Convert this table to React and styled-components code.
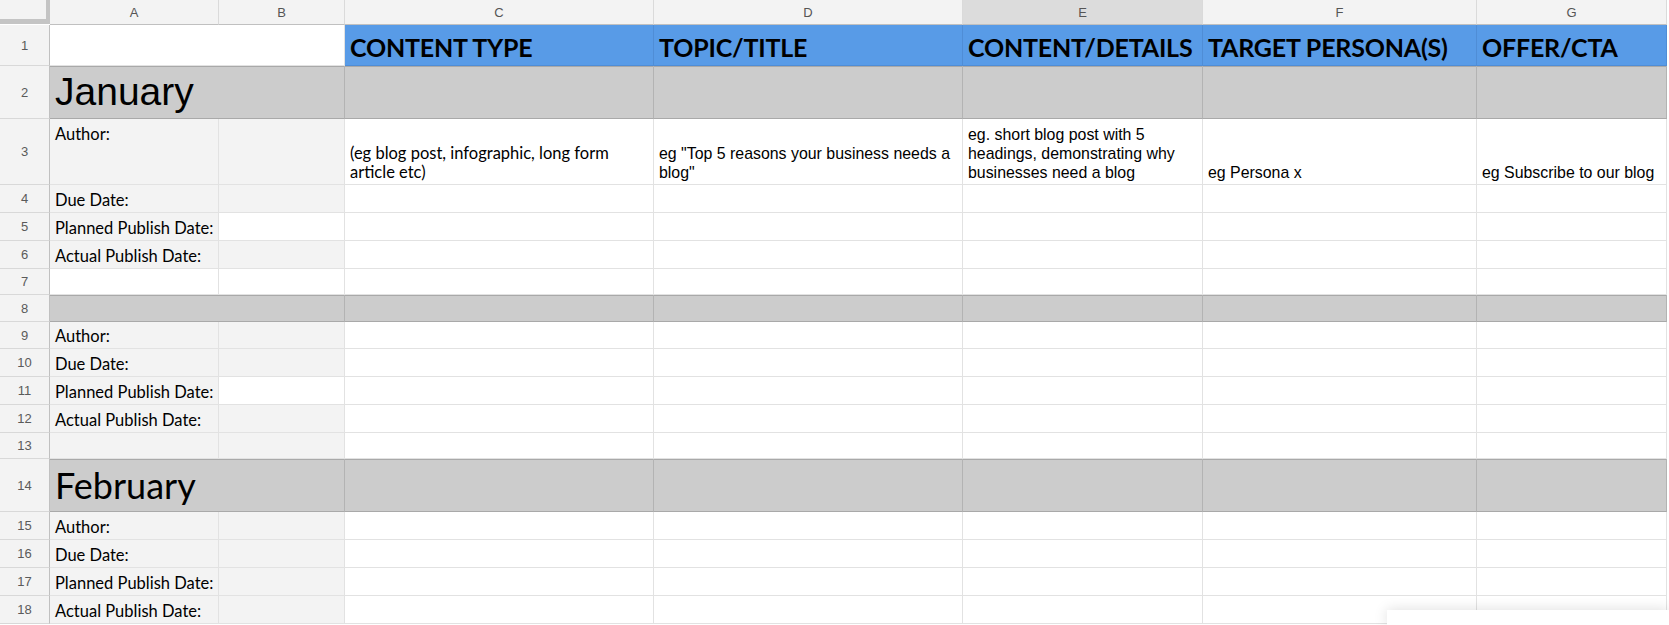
import React from "react";
import styled, { createGlobalStyle, css } from "styled-components";

const COLS = "50px 169px 126px 309px 309px 240px 274px 190px 2px";
const CALIBRI = `"Lato", "Open Sans", sans-serif`;
const ARIAL = `"Liberation Sans", Arial, sans-serif`;

const Global = createGlobalStyle`
  html, body {
    margin: 0;
    padding: 0;
    background: #ffffff;
    overflow: hidden;
  }
  * {
    box-sizing: border-box;
  }
`;

const tones = {
  white: css`
    background: #ffffff;
    border-right: 1px solid #e2e2e2;
    border-bottom: 1px solid #e2e2e2;
  `,
  label: css`
    background: #f3f3f3;
    border-right: 1px solid #e2e2e2;
    border-bottom: 1px solid #e2e2e2;
  `,
  blue: css`
    background: #589be7;
    border-right: 1px solid #4f8dd6;
    border-bottom: 1px solid #4f8dd6;
  `,
  band: css`
    background: #cccccc;
    border-right: 1px solid #b3b3b3;
    border-bottom: 1px solid #a9a9a9;
    box-shadow: inset 0 1px 0 #a9a9a9;
  `,
};

const Page = styled.div`
  position: relative;
  width: 1669px;
  height: 625px;
  overflow: hidden;
  background: #ffffff;
`;

const Row = styled.div`
  display: grid;
  grid-template-columns: ${COLS};
  height: ${({ $h }) => $h}px;
`;

const Corner = styled.div`
  background: #f3f3f3;
  border-right: 4px solid #c4c4c4;
  border-bottom: 5px solid #c4c4c4;
  height: 24px;
`;

const ColHead = styled.div`
  display: flex;
  align-items: center;
  justify-content: center;
  background: ${({ $active }) => ($active ? "#dcdcdc" : "#f3f3f3")};
  border-right: 1px solid #dadada;
  border-bottom: 1px solid #c0c0c0;
  font-family: ${ARIAL};
  font-size: 13px;
  color: #555555;
`;

const RowHead = styled.div`
  display: flex;
  align-items: center;
  justify-content: center;
  background: #f3f3f3;
  border-right: 1px solid #c0c0c0;
  border-bottom: 1px solid #d8d8d8;
  font-family: ${ARIAL};
  font-size: 13px;
  color: #5a5a5a;
`;

const Cell = styled.div`
  display: flex;
  flex-direction: column;
  justify-content: ${({ $v }) =>
    $v === "top" ? "flex-start" : $v === "center" ? "center" : "flex-end"};
  grid-column: span ${({ $span }) => $span || 1};
  padding: ${({ $v }) => ($v === "top" ? "6px 4px 0 5px" : "0 4px 2px 5px")};
  overflow: hidden;
  white-space: nowrap;
  color: #000000;
  font-family: ${({ $font }) => ($font === "arial" ? ARIAL : CALIBRI)};
  font-size: ${({ $font }) => ($font === "arial" ? "15.9px" : "16.5px")};
  line-height: 19px;
  ${({ $tone }) => tones[$tone || "white"]}
`;

const HeaderText = styled.span`
  font-family: ${CALIBRI};
  font-weight: 700;
  font-size: 25px;
  line-height: 32px;
  letter-spacing: -0.2px;
`;

const Month = styled.span`
  font-family: ${({ $font }) => ($font === "arial" ? ARIAL : CALIBRI)};
  font-size: ${({ $font }) => ($font === "arial" ? "39px" : "36px")};
  line-height: 44px;
  padding-bottom: 2px;
`;

const Popup = styled.div`
  position: absolute;
  left: 1387px;
  top: 610px;
  right: 0;
  bottom: 0;
  background: #ffffff;
  box-shadow: 0 0 14px rgba(0, 0, 0, 0.14);
`;

const letters = ["A", "B", "C", "D", "E", "F", "G"];
const headers = [
  "CONTENT TYPE",
  "TOPIC/TITLE",
  "CONTENT/DETAILS",
  "TARGET PERSONA(S)",
  "OFFER/CTA",
];

const Blank = ({ n = 5, tone = "white" }) =>
  Array.from({ length: n }).map((_, i) => <Cell key={i} $tone={tone} />);

const LabelRow = ({ n, h, label, bTone = "label" }) => (
  <Row $h={h}>
    <RowHead>{n}</RowHead>
    <Cell $tone="label">{label}</Cell>
    <Cell $tone={bTone} />
    <Blank />
    <div />
  </Row>
);

const BandRow = ({ n, h, children }) => (
  <Row $h={h}>
    <RowHead>{n}</RowHead>
    <Cell $tone="band" $span={2}>
      {children}
    </Cell>
    <Blank tone="band" />
    <div />
  </Row>
);

const App = () => {
  return (
    <Page>
      <Global />
      <Row $h={25}>
        <Corner />
        {letters.map((l) => (
          <ColHead key={l} $active={l === "E"}>
            {l}
          </ColHead>
        ))}
        <div />
      </Row>

      <Row $h={41}>
        <RowHead>1</RowHead>
        <Cell $span={2} />
        {headers.map((t) => (
          <Cell key={t} $tone="blue">
            <HeaderText>{t}</HeaderText>
          </Cell>
        ))}
        <div />
      </Row>

      <BandRow n={2} h={53}>
        <Month $font="arial">January</Month>
      </BandRow>

      <Row $h={66}>
        <RowHead>3</RowHead>
        <Cell $tone="label" $v="top">
          Author:
        </Cell>
        <Cell $tone="label" />
        <Cell>
          <span>(eg blog post, infographic, long form</span>
          <span>article etc)</span>
        </Cell>
        <Cell $font="arial">
          <span>eg "Top 5 reasons your business needs a</span>
          <span>blog"</span>
        </Cell>
        <Cell $font="arial">
          <span>eg. short blog post with 5</span>
          <span>headings, demonstrating why</span>
          <span>businesses need a blog</span>
        </Cell>
        <Cell $font="arial">eg Persona x</Cell>
        <Cell $font="arial">eg Subscribe to our blog</Cell>
        <div />
      </Row>

      <LabelRow n={4} h={28} label="Due Date:" />
      <LabelRow n={5} h={28} label="Planned Publish Date:" bTone="white" />
      <LabelRow n={6} h={28} label="Actual Publish Date:" />

      <Row $h={26}>
        <RowHead>7</RowHead>
        <Cell />
        <Cell />
        <Blank />
        <div />
      </Row>

      <BandRow n={8} h={27} />

      <LabelRow n={9} h={27} label="Author:" />
      <LabelRow n={10} h={28} label="Due Date:" />
      <LabelRow n={11} h={28} label="Planned Publish Date:" bTone="white" />
      <LabelRow n={12} h={28} label="Actual Publish Date:" />
      <LabelRow n={13} h={26} label="" />

      <BandRow n={14} h={53}>
        <Month>February</Month>
      </BandRow>

      <LabelRow n={15} h={28} label="Author:" />
      <LabelRow n={16} h={28} label="Due Date:" />
      <LabelRow n={17} h={28} label="Planned Publish Date:" />
      <LabelRow n={18} h={28} label="Actual Publish Date:" />

      <Popup />
    </Page>
  );
};

export default App;
